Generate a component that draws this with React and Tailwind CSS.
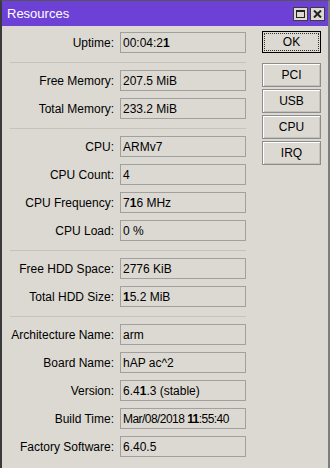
import React from 'react';

const font = { fontFamily: '"Liberation Sans", Arial, sans-serif' };

// digits "1" render heavier in the original window, keep that look
function Val({ text }) {
  const parts = text.split(/(\*1)/);
  return (
    <span className="whitespace-pre">
      {parts.map((p, i) =>
        p === '*1' ? (
          <span key={i} className="font-bold">1</span>
        ) : (
          <span key={i}>{p}</span>
        )
      )}
    </span>
  );
}

const groups = [
  [['Uptime', '00:04:2*1']],
  [
    ['Free Memory', '207.5 MiB'],
    ['Total Memory', '233.2 MiB'],
  ],
  [
    ['CPU', 'ARMv7'],
    ['CPU Count', '4'],
    ['CPU Frequency', '7*16 MHz'],
    ['CPU Load', '0 %'],
  ],
  [
    ['Free HDD Space', '2776 KiB'],
    ['Total HDD Size', '*15.2 MiB'],
  ],
  [
    ['Architecture Name', 'arm'],
    ['Board Name', 'hAP ac^2'],
    ['Version', '6.4*1.3 (stable)'],
    ['Build Time', 'Mar/08/2018 *1*1:55:40', true],
    ['Factory Software', '6.40.5'],
  ],
];

function Row({ label, value, tight }) {
  return (
    <div className="flex items-center">
      <div className="w-[112px] text-right text-[12px] leading-none text-black whitespace-nowrap">
        {label}:
      </div>
      <div
        className={
          tight
            ? 'ml-[6px] flex h-[21px] w-[126px] items-center overflow-hidden border border-[#a0a0a0] pl-[2px] text-[12px] leading-none tracking-[-0.55px] text-black whitespace-nowrap'
            : 'ml-[6px] flex h-[21px] w-[126px] items-center overflow-hidden border border-[#a0a0a0] pl-[2px] text-[12px] leading-none text-black whitespace-nowrap'
        }
      >
        <Val text={value} />
      </div>
    </div>
  );
}

function SideButton({ children }) {
  return (
    <button
      type="button"
      className="flex h-[24px] w-[59px] items-center justify-center border border-[#8c8c8c] text-[12px] text-black shadow-[inset_1px_1px_0_#ffffff,inset_-1px_-1px_0_#c4c1ba]"
    >
      {children}
    </button>
  );
}

export default function App() {
  return (
    <div className="h-[468px] w-[330px] overflow-hidden bg-[#dcd9d2]" style={font}>
      <div className="flex h-full flex-col border-l-2 border-r-2 border-t border-l-[#3a3a3a] border-r-[#7d7d7d] border-t-[#555555]">
        {/* Title bar */}
        <div className="flex h-[25px] shrink-0 items-center bg-[#6e41d6] pl-[5px] pr-[3px]">
          <span className="text-[13px] text-white">Resources</span>
          <div className="ml-auto flex gap-[2px]">
            <div className="flex h-[14px] w-[15px] items-center justify-center border border-[#3c3c3c] bg-[#dcd9d2]">
              <div className="h-[8px] w-[9px] border border-t-2 border-[#222222]" />
            </div>
            <div className="flex h-[14px] w-[15px] items-center justify-center border border-[#3c3c3c] bg-[#dcd9d2]">
              <svg width="9" height="8" viewBox="0 0 9 8">
                <path d="M1 0.5 L8 7.5 M8 0.5 L1 7.5" stroke="#222222" strokeWidth="2" />
              </svg>
            </div>
          </div>
        </div>

        {/* Body */}
        <div className="flex pt-[6px]">
          <div className="flex flex-col gap-[7px]">
            {groups.map((g, gi) => (
              <React.Fragment key={gi}>
                {gi > 0 && (
                  <div className="ml-[8px] mt-[2px] h-px w-[236px] bg-[#c6c3bc]" />
                )}
                {g.map(([l, v, t]) => (
                  <Row key={l} label={l} value={v} tight={t} />
                ))}
              </React.Fragment>
            ))}
          </div>

          <div className="ml-[16px] flex flex-col">
            <button
              type="button"
              className="mt-[-1px] flex h-[22px] w-[59px] items-center justify-center border border-black text-[12px] text-black"
            >
              <span className="flex h-[18px] w-[55px] items-center justify-center border border-dotted border-[#333333]">
                OK
              </span>
            </button>
            <div className="mt-[10px] flex flex-col gap-[2px]">
              <SideButton>PCI</SideButton>
              <SideButton>USB</SideButton>
              <SideButton>CPU</SideButton>
              <SideButton>IRQ</SideButton>
            </div>
          </div>
        </div>
      </div>
    </div>
  );
}
